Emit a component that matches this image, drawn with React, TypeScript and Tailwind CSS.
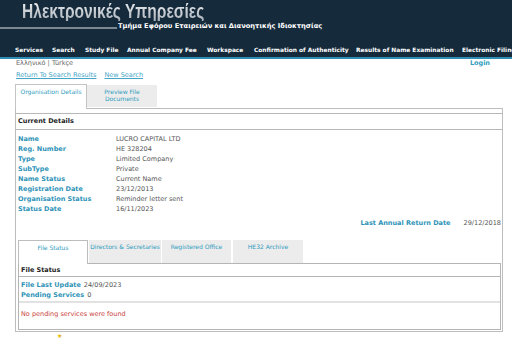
import React from "react";

const details: [string, string][] = [
  ["Name", "LUCRO CAPITAL LTD"],
  ["Reg. Number", "HE 328204"],
  ["Type", "Limited Company"],
  ["SubType", "Private"],
  ["Name Status", "Current Name"],
  ["Registration Date", "23/12/2013"],
  ["Organisation Status", "Reminder letter sent"],
  ["Status Date", "16/11/2023"],
];

const nav: [string, string][] = [
  ["Services", "w-[37px]"],
  ["Search", "w-[33px]"],
  ["Study File", "w-[42px]"],
  ["Annual Company Fee", "w-[80px]"],
  ["Workspace", "w-[47px]"],
  ["Confirmation of Authenticity", "w-[102px]"],
  ["Results of Name Examination", "w-[106px]"],
  ["Electronic Filing", "w-[60px]"],
];

export default function App() {
  return (
    <div className="w-[512px] h-[339px] overflow-hidden bg-white font-['DejaVu_Sans',Verdana,sans-serif] text-[6.5px] leading-none">
      {/* Header */}
      <div className="h-[57px] bg-[#152a3b] flex flex-col">
        <div className="pl-[22px] h-[21px]">
          <span className="inline-block origin-left scale-x-[0.76] font-['Liberation_Sans',Arial,sans-serif] font-bold text-[20.5px] leading-[21px] bg-gradient-to-b from-[#f2f4f6] to-[#a9b1b9] bg-clip-text text-transparent whitespace-nowrap">
            Ηλεκτρονικές Υπηρεσίες
          </span>
        </div>
        <div className="flex items-end mt-[2px]">
          <div className="w-[117px] h-[2px] bg-[#7d8791] mb-[1px]" />
          <span className="pl-[1px] font-bold text-[6.7px] text-white whitespace-nowrap">
            Τμήμα Εφόρου Εταιρειών και Διανοητικής Ιδιοκτησίας
          </span>
        </div>
        <div className="mt-auto pb-[3px] pl-[15px] flex whitespace-nowrap">
          {nav.map(([n, w]) => (
            <span key={n} className={`${w} shrink-0 font-bold text-white text-[5.9px]`}>
              {n}
            </span>
          ))}
        </div>
      </div>
      <div className="h-[2px] bg-[#2f8db5]" />

      {/* Lang + login */}
      <div className="flex justify-between items-center h-[7px] mt-[1px] pl-[16px] pr-[22px]">
        <span className="text-[#666]">Ελληνικό | Türkçe</span>
        <span className="font-bold text-[#2f9cc0]">Login</span>
      </div>
      <div className="flex gap-[8px] pl-[16px] mt-[3px] h-[10px] items-center">
        <span className="underline text-[#45a6c8]">Return To Search Results</span>
        <span className="underline text-[#45a6c8]">New Search</span>
      </div>

      {/* Tabs */}
      <div className="ml-[15px] mt-[4px] flex items-start h-[24px]">
        <div className="relative z-10 w-[72px] h-[25px] bg-white border-l border-t border-r border-[#c4c4c4] text-center pt-[4px] text-[#2f9cc0] text-[6px]">
          Organisation Details
        </div>
        <div className="w-[70px] h-[22px] mt-[1px] bg-[#ececec] text-center pt-[3px] text-[#2f9cc0] text-[6px] leading-[7px]">
          Preview File
          <br />
          Documents
        </div>
      </div>

      {/* Panel */}
      <div className="ml-[15px] w-[488px] h-[224px] border border-[#bdbdbd] pt-[4px]">
        <div className="h-[17px] border-t border-b border-[#b8b8b8] flex items-center pl-[2px] font-bold text-[#222]">
          Current Details
        </div>
        <div className="pt-[4px] pl-[2px]">
          {details.map(([k, v]) => (
            <div key={k} className="flex h-[10px] items-center">
              <span className="w-[98px] font-bold text-[#2f93b8]">{k}</span>
              <span className="text-[#555]">{v}</span>
            </div>
          ))}
        </div>
        <div className="flex justify-end items-center gap-[13px] h-[10px] mt-[4px] pr-[1px]">
          <span className="font-bold text-[#2f93b8]">Last Annual Return Date</span>
          <span className="text-[#555]">29/12/2018</span>
        </div>

        {/* Sub tabs */}
        <div className="ml-[2px] mt-[12px] flex gap-[1px] h-[23px]">
          <div className="relative z-10 w-[70px] h-[24px] bg-white border-l border-t border-r border-[#bdbdbd] text-center pt-[4px] text-[#2f9cc0] text-[6px]">
            File Status
          </div>
          <div className="w-[72px] h-[23px] bg-[#ececec] text-center pt-[4px] text-[#2f9cc0] text-[6px]">
            Directors &amp; Secretaries
          </div>
          <div className="w-[69px] h-[23px] bg-[#ececec] text-center pt-[4px] text-[#2f9cc0] text-[6px]">
            Registered Office
          </div>
          <div className="w-[70px] h-[23px] ml-[1px] bg-[#ececec] text-center pt-[4px] text-[#2f9cc0] text-[6px]">
            HE32 Archive
          </div>
        </div>
        <div className="ml-[2px] w-[483px] h-[67px] border border-[#b5b5b5]">
          <div className="h-[13px] border-b border-[#b5b5b5] flex items-center pl-[2px] font-bold text-[#222]">
            File Status
          </div>
          <div className="pl-[2px] pt-[3px]">
            <div className="flex h-[10px] items-center gap-[3px]">
              <span className="font-bold text-[#2f93b8]">File Last Update</span>
              <span className="text-[#555]">24/09/2023</span>
            </div>
            <div className="flex h-[10px] items-center gap-[3px]">
              <span className="font-bold text-[#2f93b8]">Pending Services</span>
              <span className="text-[#555]">0</span>
            </div>
          </div>
          <div className="mt-[1px] h-[2px] bg-[#e2e2e2]" />
          <div className="pl-[2px] h-[22px] flex items-center text-[#c9423c]">
            No pending services were found
          </div>
        </div>
      </div>
      <div className="pl-[57px] text-[6px] text-[#e8b400] leading-none mt-[1px]">★</div>
    </div>
  );
}
